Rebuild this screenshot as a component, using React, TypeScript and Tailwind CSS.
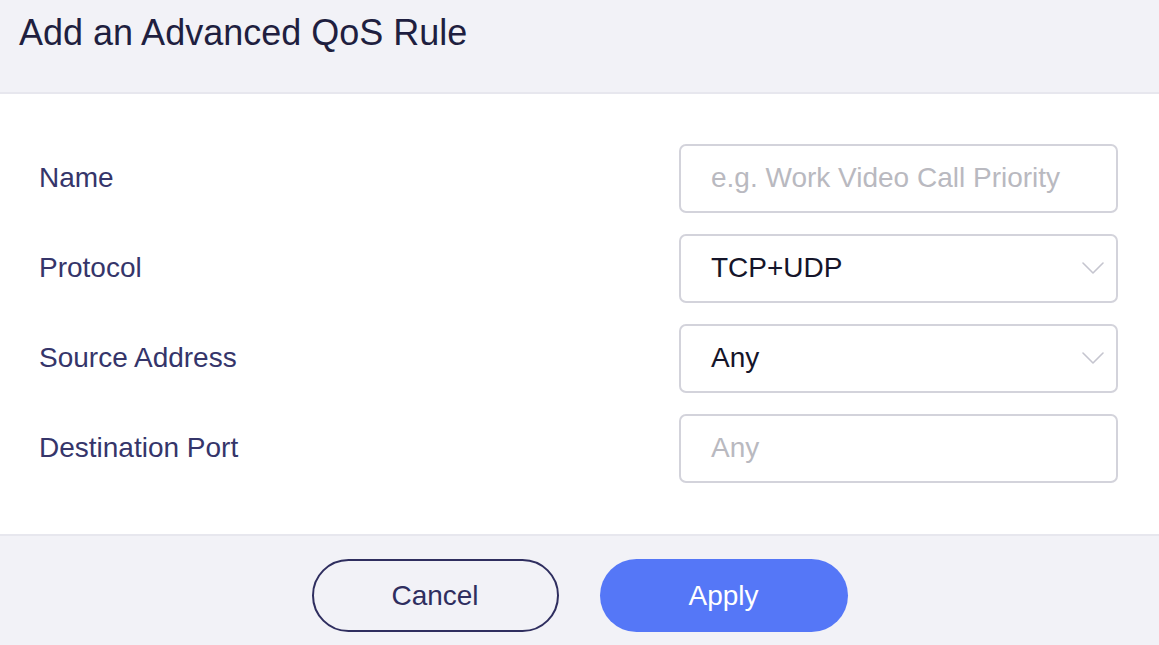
import React from "react";

const Chevron = () => (
  <svg width="22" height="12" viewBox="0 0 22 12" fill="none" className="shrink-0">
    <path d="M1 1 L11 11 L21 1" stroke="#c5c5cf" strokeWidth="1.6" strokeLinecap="round" strokeLinejoin="round" />
  </svg>
);

const rows: { label: string; value: string; placeholder: boolean; select: boolean }[] = [
  { label: "Name", value: "e.g. Work Video Call Priority", placeholder: true, select: false },
  { label: "Protocol", value: "TCP+UDP", placeholder: false, select: true },
  { label: "Source Address", value: "Any", placeholder: false, select: true },
  { label: "Destination Port", value: "Any", placeholder: true, select: false },
];

export default function App() {
  return (
    <div
      className="w-[1159px] h-[645px] flex flex-col bg-white overflow-hidden"
      style={{ fontFamily: '"Liberation Sans", Arial, sans-serif' }}
    >
      <div className="h-[94px] shrink-0 bg-[#f2f2f7] border-b-2 border-[#e7e7ee] pl-[19px] pt-[11px]">
        <h1 className="text-[36px] leading-[44px] text-[#1f1f40]">Add an Advanced QoS Rule</h1>
      </div>
      <div className="h-[440px] shrink-0 flex flex-col gap-[22px] pt-[50px] pl-[39px] pr-[41px]">
        {rows.map((r) => (
          <div key={r.label} className="flex items-center justify-between h-[68px]">
            <span className="text-[28px] text-[#35356a]">{r.label}</span>
            <div className="w-[439px] h-[69px] border-2 border-[#d3d3db] rounded-[7px] flex items-center justify-between pl-[30px] pr-[12px]">
              <span className={r.placeholder ? "text-[28px] text-[#b9b9c0]" : "text-[28px] text-[#15152a]"}>
                {r.value}
              </span>
              {r.select && <Chevron />}
            </div>
          </div>
        ))}
      </div>
      <div className="flex-1 bg-[#f2f2f7] border-t-2 border-[#e7e7ee] flex justify-center gap-[41px] pt-[23px]">
        <button className="w-[247px] h-[73px] rounded-full border-2 border-[#2f2e5f] text-[28px] text-[#2f2e5f] bg-transparent">
          Cancel
        </button>
        <button className="w-[248px] h-[73px] rounded-full bg-[#5577f7] text-[28px] text-white">
          Apply
        </button>
      </div>
    </div>
  );
}
